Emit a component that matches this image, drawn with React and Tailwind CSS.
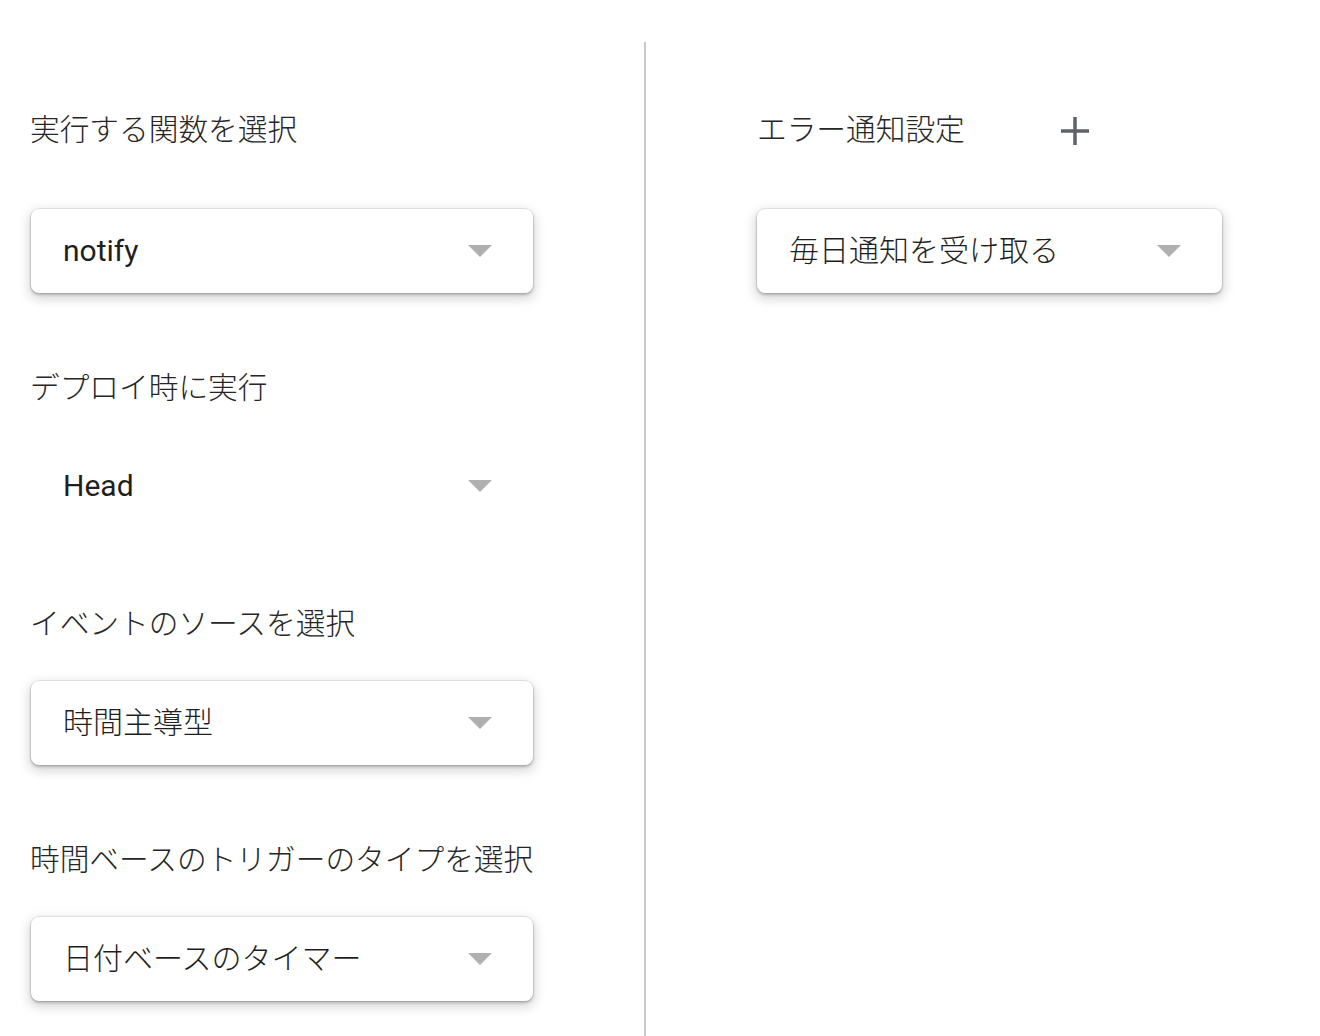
const fontStack = { fontFamily: 'Roboto, "Noto Sans CJK JP", sans-serif' };

function Caret() {
  return (
    <svg width="24" height="12" viewBox="0 0 24 12" className="shrink-0">
      <path d="M0 0 L24 0 L12 12 Z" fill="#b0b0b0" />
    </svg>
  );
}

function Select({ value, width = "w-[502px]", flat = false, light = true }) {
  return (
    <div
      className={`${width} h-[84px] flex items-center justify-between pl-[32px] pr-[41px] rounded-[8px] bg-white ${
        flat
          ? ""
          : "shadow-[0_0_0_1px_rgba(0,0,0,0.08),0_2px_3px_rgba(0,0,0,0.2),0_4px_12px_2px_rgba(0,0,0,0.16)]"
      }`}
    >
      <span className={`text-[30px] leading-none text-[#1f1f1f] ${light ? "font-light" : ""}`}>{value}</span>
      <Caret />
    </div>
  );
}

function Label({ children }) {
  return (
    <div className="h-[40px] flex items-center text-[29.7px] leading-[40px] font-light text-[#262626]">
      {children}
    </div>
  );
}

export default function App() {
  return (
    <div className="min-h-screen h-[1036px] bg-white flex" style={fontStack}>
      {/* Left column */}
      <div className="w-[644px] shrink-0 pl-[30px] pt-[110px]">
        <Label>実行する関数を選択</Label>
        <div className="mt-[59px] pl-px">
          <Select value="notify" light={false} />
        </div>

        <div className="mt-[75px]">
          <Label>デプロイ時に実行</Label>
        </div>
        <div className="mt-[36px] pl-px">
          <Select value="Head" flat light={false} />
        </div>

        <div className="mt-[76px]">
          <Label>イベントのソースを選択</Label>
        </div>
        <div className="mt-[37px] pl-px">
          <Select value="時間主導型" />
        </div>

        <div className="mt-[75px]">
          <Label>時間ベースのトリガーのタイプを選択</Label>
        </div>
        <div className="mt-[37px] pl-px">
          <Select value="日付ベースのタイマー" />
        </div>
      </div>

      {/* Divider */}
      <div className="w-[2px] mt-[42px] bg-[#c8c9cc] shrink-0" />

      {/* Right column */}
      <div className="pl-[111px] pt-[110px]">
        <div className="flex items-center">
          <div className="w-[304px]">
            <Label>エラー通知設定</Label>
          </div>
          <svg width="30" height="30" viewBox="0 0 30 30" className="-ml-[1px] mt-[2px]">
            <path d="M15 1 V29 M1 15 H29" stroke="#5f6368" strokeWidth="3.5" />
          </svg>
        </div>
        <div className="mt-[59px]">
          <Select value="毎日通知を受け取る" width="w-[465px]" />
        </div>
      </div>
    </div>
  );
}
